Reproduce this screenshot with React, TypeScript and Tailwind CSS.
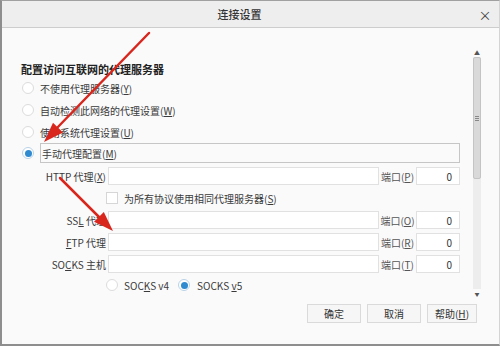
import { FC, ReactNode } from 'react';

const U: FC<{ children: ReactNode }> = ({ children }) => <span className="underline underline-offset-1">{ children }</span>;

const Radio: FC<{ checked?: boolean }> = ({ checked }) => (
    <span className={ `w-[12px] h-[12px] rounded-full border bg-white flex items-center justify-center shrink-0 ${ checked ? 'border-[#b9d3e8]' : 'border-[#dcdcdc]' }` }>
        { checked && <span className="w-[7px] h-[7px] rounded-full bg-[#2f8ad0]" /> }
    </span>
);

const Field: FC<{ label: ReactNode; port: ReactNode; className?: string }> = ({ label, port, className }) => (
    <div className={ `flex items-center h-[18px] ${ className ?? '' }` }>
        <div className="w-[87px] shrink-0 pr-[2px] flex justify-end whitespace-nowrap">{ label }</div>
        <div className="flex-1 h-full bg-white border border-[#e1e1e1]" />
        <div className="w-[37px] shrink-0 text-center text-[#555] whitespace-nowrap">{ port }</div>
        <div className="w-[44px] shrink-0 h-full bg-white border border-[#e1e1e1] flex items-center justify-end pr-[7px] text-[#333]">0</div>
    </div>
);

const OptionRow: FC<{ checked?: boolean; children: ReactNode }> = ({ checked, children }) => (
    <div className="flex items-center h-[22px] gap-[6px] pl-[1px]">
        <Radio checked={ checked } />
        <span>{ children }</span>
    </div>
);

export default function App()
{
    return (
        <div className="relative w-[500px] h-[346px] flex flex-col bg-[#fbfafb] border-l-2 border-t border-b-2 border-r border-l-[#8e8e8e] border-t-[#a0a0a0] border-b-[#8e8e8e] border-r-[#d4d4d4] text-[10px] text-[#3a3a3a] font-['Noto_Sans_CJK_SC','Noto_Sans',sans-serif] overflow-hidden">
            {/* Title bar */}
            <div className="h-[27px] shrink-0 flex items-center bg-[#efeeef] border-b border-[#cdcdcd]">
                <div className="flex-1 text-center text-[11px] font-medium text-[#333] pl-[4px]">连接设置</div>
                <div className="w-[24px] mr-[2px] text-[13px] leading-none text-[#444] text-center">×</div>
            </div>

            {/* Body */}
            <div className="h-[272px] shrink-0 flex">
                <div className="flex-1 flex flex-col pl-[19px] pr-[12px] pt-[33px]">
                    <div className="h-[16px] leading-[16px] text-[11px] font-bold text-[#222]">配置访问互联网的代理服务器</div>
                    <OptionRow>不使用代理服务器(<U>Y</U>)</OptionRow>
                    <OptionRow>自动检测此网络的代理设置(<U>W</U>)</OptionRow>
                    <OptionRow>使用系统代理设置(<U>U</U>)</OptionRow>
                    <div className="flex items-center h-[20px] gap-[6px] pl-[1px]">
                        <Radio checked />
                        <div className="flex-1 h-full border border-[#c6c6c6] flex items-center pl-[1px]">手动代理配置(<U>M</U>)</div>
                    </div>

                    <Field className="mt-[4px]" label={ <span>HTTP 代理(<U>X</U>)</span> } port={ <>端口(<U>P</U>)</> } />
                    <div className="h-[26px] flex items-center pl-[85px]">
                        <span className="w-[12px] h-[12px] shrink-0 bg-white border border-[#d6d6d6]" />
                        <span className="ml-[6px]">为所有协议使用相同代理服务器(<U>S</U>)</span>
                    </div>
                    <Field label={ <span>SS<U>L</U> 代理</span> } port={ <>端口(<U>O</U>)</> } />
                    <Field className="mt-[4px]" label={ <span><U>F</U>TP 代理</span> } port={ <>端口(<U>R</U>)</> } />
                    <Field className="mt-[4px]" label={ <span>SO<U>C</U>KS 主机</span> } port={ <>端口(<U>T</U>)</> } />
                    <div className="h-[24px] flex items-center pl-[85px]">
                        <Radio />
                        <span className="ml-[6px]">SOC<U>K</U>S v4</span>
                        <span className="ml-[9px]"><Radio checked /></span>
                        <span className="ml-[7px]">SOCKS <U>v</U>5</span>
                    </div>
                </div>

                {/* Scrollbar */}
                <div className="w-[10px] mr-[17px] mt-[20px] mb-[3px] flex flex-col items-center">
                    <div className="h-[9px] w-full flex items-center justify-center text-[6px] leading-none text-[#555]">▲</div>
                    <div className="flex-1 w-[8px] bg-[#ededed] flex flex-col">
                        <div className="h-[122px] w-full rounded-[2px] bg-[#d9d9d9] border border-[#c4c4c4] flex flex-col items-center justify-center gap-[1px]">
                            <span className="w-[4px] h-px bg-[#888]" />
                            <span className="w-[4px] h-px bg-[#888]" />
                            <span className="w-[4px] h-px bg-[#888]" />
                        </div>
                    </div>
                    <div className="h-[8px] w-full flex items-center justify-center text-[5px] leading-none text-[#555]">▼</div>
                </div>
            </div>

            {/* Footer */}
            <div className="flex-1 flex justify-end items-start pt-[4px] pr-[22px] gap-[6px] text-[10px] text-[#333]">
                <div className="w-[54px] h-[19px] bg-[#f6f6f6] border border-[#dadada] flex items-center justify-center">确定</div>
                <div className="w-[54px] h-[19px] bg-[#f6f6f6] border border-[#dadada] flex items-center justify-center">取消</div>
                <div className="w-[50px] h-[19px] bg-[#f6f6f6] border border-[#dadada] flex items-center justify-center">帮助(<U>H</U>)</div>
            </div>

            {/* Red annotation arrows */}
            <svg className="absolute left-[-2px] top-[-1px] pointer-events-none" width="500" height="346" viewBox="0 0 500 346">
                <line x1="149" y1="33" x2="55" y2="130" stroke="#d8261d" strokeWidth="2.5" strokeLinecap="round" />
                <polygon points="44,142 63,132.5 53,122.7" fill="#d8261d" />
                <line x1="60" y1="178" x2="102" y2="220" stroke="#d8261d" strokeWidth="2.5" strokeLinecap="round" />
                <polygon points="113,231 94,221.8 103.8,212" fill="#d8261d" />
            </svg>
        </div>
    );
}
